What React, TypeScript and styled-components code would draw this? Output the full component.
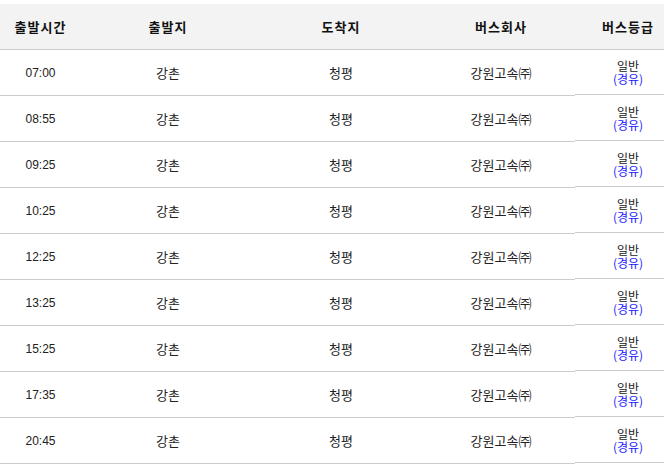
import React from 'react'
import styled, {createGlobalStyle} from 'styled-components'

interface BusRow {
  time: string
  from: string
  to: string
  company: string
  grade: string
  via: string
}

const ROWS: BusRow[] = ['07:00', '08:55', '09:25', '10:25', '12:25', '13:25', '15:25', '17:35', '20:45'].map(
  (time) => ({
    time,
    from: '강촌',
    to: '청평',
    company: '강원고속㈜',
    grade: '일반',
    via: '(경유)',
  }),
)

const HEADERS = ['출발시간', '출발지', '도착지', '버스회사', '버스등급']

const GlobalStyle = createGlobalStyle`
  html, body {
    margin: 0;
    padding: 0;
    background: #fff;
    overflow: hidden;
  }
  body {
    font-family: "Liberation Sans", "Noto Sans CJK KR", sans-serif;
    font-size: 12px;
    color: #222;
  }
`

export default function App() {
  return (
    <>
      <GlobalStyle />
      <Page>
        <Table>
          <HeaderRow>
            {HEADERS.map((h) => (
              <HeaderCell key={h}>{h}</HeaderCell>
            ))}
          </HeaderRow>
          {ROWS.map((row, index) => (
            <Row key={index}>
              <Cell>{row.time}</Cell>
              <Cell $korean>{row.from}</Cell>
              <Cell $korean>{row.to}</Cell>
              <Cell $korean>{row.company}</Cell>
              <GradeCell $korean>
                <Grade>{row.grade}</Grade>
                <Via>{row.via}</Via>
              </GradeCell>
            </Row>
          ))}
        </Table>
      </Page>
    </>
  )
}

const Page = styled.div`
  padding-top: 4px;
  width: 680px;
`

const Table = styled.div`
  display: grid;
  grid-template-columns: 81px 174px 172px 148px 106px;
`

const HeaderRow = styled.div`
  display: contents;
`

const HeaderCell = styled.div`
  height: 45px;
  display: flex;
  align-items: center;
  justify-content: center;
  background: #f3f3f3;
  border-bottom: 1px solid #cccccc;
  font-family: "Noto Sans CJK KR", sans-serif;
  font-size: 13px;
  font-weight: bold;
  letter-spacing: 1px;
  color: #111;
`

const Row = styled.div`
  display: contents;
`

const Cell = styled.div<{$korean?: boolean}>`
  height: 45px;
  display: flex;
  align-items: center;
  justify-content: center;
  border-bottom: 1px solid #cccccc;
  font-family: ${(props) => (props.$korean ? '"Noto Sans CJK KR", sans-serif' : '"Liberation Sans", sans-serif')};
  font-size: ${(props) => (props.$korean ? '13px' : '12px')};
  color: #222;
`

const GradeCell = styled(Cell)`
  flex-direction: column;
  font-size: 12px;
  padding-top: 1px;
  box-sizing: border-box;
`

const Grade = styled.span`
  line-height: 12px;
`

const Via = styled.span`
  line-height: 13px;
  color: #1a1aff;
`
